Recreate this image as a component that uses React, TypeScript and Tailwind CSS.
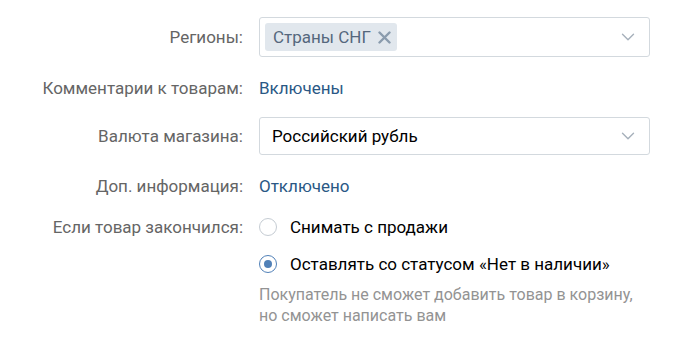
import { ChevronDown } from "lucide-react";

function Row({ label, children, align = "center" }: { label: string; children: React.ReactNode; align?: "center" | "start" }) {
    return (
        <div className={`flex text-[17px] leading-5 ${align === "center" ? "items-center" : "items-start"}`}>
            <div className="w-[243px] shrink-0 text-right text-[#656565]">{label}</div>
            <div className="ml-4 w-[391px]">{children}</div>
        </div>
    );
}

function Select({ children }: { children: React.ReactNode }) {
    return (
        <div className="flex items-center justify-between rounded-[3px] border border-[#d3d9de] bg-white">
            {children}
        </div>
    );
}

function Radio({ checked, label }: { checked?: boolean; label: string }) {
    return (
        <label className="flex h-5 items-center text-black">
            <span className={`flex h-[18px] w-[18px] items-center justify-center rounded-full border ${checked ? "border-[#5181b8]" : "border-[#c5ccd3]"}`}>
                {checked && <span className="h-2 w-2 rounded-full bg-[#5181b8]" />}
            </span>
            <span className="ml-[13px]">{label}</span>
        </label>
    );
}

export default function App() {
    return (
        <div className="h-[348px] w-[700px] bg-white pt-[17px] font-['Roboto',_'Noto_Sans',_sans-serif]">
            <Row label="Регионы:">
                <Select>
                    <div className="flex h-[38px] items-center pl-[5px]">
                        <span className="flex h-7 items-center rounded-[3px] bg-[#e1e7ed] pl-2 pr-[6px] text-[#55677d]">
                            Страны СНГ
                            <svg className="ml-[7px]" width="13" height="13" viewBox="0 0 13 13">
                                <path d="M1.5 1.5l10 10M11.5 1.5l-10 10" stroke="#8a9bad" strokeWidth="2.4" strokeLinecap="round" />
                            </svg>
                        </span>
                    </div>
                    <ChevronDown className="mr-[10px] text-[#a6b0bb]" size={22} strokeWidth={1.5} />
                </Select>
            </Row>

            <div className="mt-[21px]">
                <Row label="Комментарии к товарам:">
                    <span className="text-[#2a5885]">Включены</span>
                </Row>
            </div>

            <div className="mt-[19px]">
                <Row label="Валюта магазина:">
                    <Select>
                        <div className="flex h-9 items-center pl-3 text-black">Российский рубль</div>
                        <ChevronDown className="mr-[10px] text-[#a6b0bb]" size={22} strokeWidth={1.5} />
                    </Select>
                </Row>
            </div>

            <div className="mt-[21px]">
                <Row label="Доп. информация:">
                    <span className="text-[#2a5885]">Отключено</span>
                </Row>
            </div>

            <div className="mt-[21px]">
                <Row label="Если товар закончился:" align="start">
                    <Radio label="Снимать с продажи" />
                    <div className="mt-[17px]">
                        <Radio checked label="Оставлять со статусом «Нет в наличии»" />
                    </div>
                    <p className="mt-[10px] text-[16px] leading-[21px] text-[#939393]">
                        Покупатель не сможет добавить товар в корзину,
                        <br />
                        но сможет написать вам
                    </p>
                </Row>
            </div>
        </div>
    );
}
